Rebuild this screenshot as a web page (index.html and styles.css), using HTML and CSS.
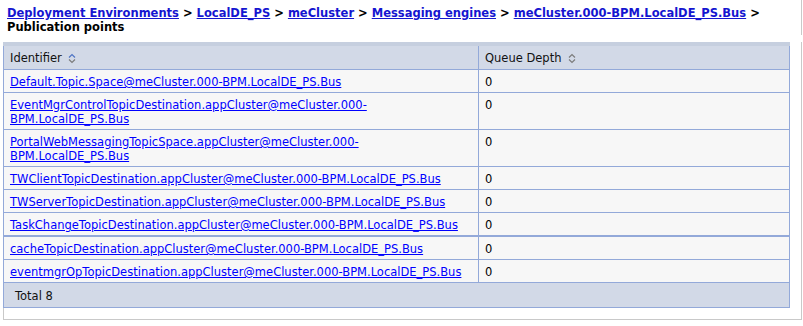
FILE: index.html
```html
<!DOCTYPE html>
<html lang="en">
<head>
    <meta charset="UTF-8">
    <title>Publication points</title>
    <link rel="stylesheet" href="styles.css">
</head>
<body>
    <div class="crumbs">
        <div class="crumb-line">
            <a href="#">Deployment Environments</a> &gt;
            <a href="#">LocalDE_PS</a> &gt;
            <a href="#">meCluster</a> &gt;
            <a href="#">Messaging engines</a> &gt;
            <a href="#">meCluster.000-BPM.LocalDE_PS.Bus</a> &gt;
        </div>
        <div class="crumb-title">Publication points</div>
    </div>

    <div class="frame">
        <table class="grid">
            <colgroup>
                <col class="col-id">
                <col>
            </colgroup>
            <thead>
                <tr>
                    <th>Identifier
                        <svg class="sort" width="8" height="13" viewBox="0 0 8 13">
                            <path d="M1 5.5 L4 2.5 L7 5.5" class="up active"/>
                            <path d="M1 7.5 L4 10.5 L7 7.5" class="down"/>
                        </svg>
                    </th>
                    <th>Queue Depth
                        <svg class="sort" width="8" height="13" viewBox="0 0 8 13">
                            <path d="M1 5.5 L4 2.5 L7 5.5" class="up"/>
                            <path d="M1 7.5 L4 10.5 L7 7.5" class="down"/>
                        </svg>
                    </th>
                </tr>
            </thead>
            <tbody>
                <tr><td><a href="#">Default.Topic.Space@meCluster.000-BPM.LocalDE_PS.Bus</a></td><td>0</td></tr>
                <tr><td><a href="#">EventMgrControlTopicDestination.appCluster@meCluster.000-<br>BPM.LocalDE_PS.Bus</a></td><td>0</td></tr>
                <tr><td><a href="#">PortalWebMessagingTopicSpace.appCluster@meCluster.000-<br>BPM.LocalDE_PS.Bus</a></td><td>0</td></tr>
                <tr><td><a href="#">TWClientTopicDestination.appCluster@meCluster.000-BPM.LocalDE_PS.Bus</a></td><td>0</td></tr>
                <tr><td><a href="#">TWServerTopicDestination.appCluster@meCluster.000-BPM.LocalDE_PS.Bus</a></td><td>0</td></tr>
                <tr class="page-end"><td><a href="#">TaskChangeTopicDestination.appCluster@meCluster.000-BPM.LocalDE_PS.Bus</a></td><td>0</td></tr>
                <tr><td><a href="#">cacheTopicDestination.appCluster@meCluster.000-BPM.LocalDE_PS.Bus</a></td><td>0</td></tr>
                <tr><td><a href="#">eventmgrOpTopicDestination.appCluster@meCluster.000-BPM.LocalDE_PS.Bus</a></td><td>0</td></tr>
            </tbody>
            <tfoot>
                <tr><td colspan="2" class="total">Total 8</td></tr>
            </tfoot>
        </table>
    </div>
</body>
</html>
```

FILE: styles.css
```css
:root {
    --link: #0000ff;
    --crumb-link: #1515d0;
    --row-bg: #f7f7f7;
    --head-bg: #d2d9e7;
    --grid-line: #93a9d9;
    --band: #c6cfdf;
    --frame-line: #c9c9c9;
}

body {
    margin: 0;
    font-family: "DejaVu Sans", Verdana, sans-serif;
    font-size: 11.5px;
    color: #000;
    background: #fff;
}

.crumbs {
    height: 35px;
    padding: 6px 0 0 7px;
    box-sizing: border-box;
    width: 802px;
    border-right: 1px solid var(--frame-line);
    font-size: 11.5px;
    font-weight: bold;
    line-height: 14px;
    color: #000;
}

.crumbs a {
    color: var(--crumb-link);
}

.frame {
    margin: 7px 0 0 3px;
    width: 797px;
    height: 277px;
    border-left: 1px solid var(--frame-line);
    border-right: 1px solid var(--frame-line);
    border-bottom: 1px solid var(--frame-line);
}

.grid {
    margin-left: -1px;
    width: 787px;
    table-layout: fixed;
    border-collapse: collapse;
    border-top: 4px solid var(--band);
    border-left: 1px solid var(--grid-line);
    border-right: 1px solid var(--grid-line);
}

.col-id {
    width: 475px;
}

.grid th {
    background: var(--head-bg);
    font-weight: normal;
    text-align: left;
    padding: 5px 6px 3px;
    line-height: 15px;
    border-top: 1px solid var(--grid-line);
    border-bottom: 1px solid var(--grid-line);
    border-left: 1px solid var(--grid-line);
    color: #111;
}

.sort {
    vertical-align: -3px;
    margin-left: 3px;
}

.sort path {
    fill: none;
    stroke: #7c7c7c;
    stroke-width: 1.2;
}

.sort path.active {
    stroke: #4f74c4;
}

.grid td {
    background: var(--row-bg);
    padding: 5px 6px 3px;
    line-height: 14px;
    vertical-align: top;
    border-bottom: 1px solid var(--grid-line);
    border-left: 1px solid var(--grid-line);
}

.grid td a {
    color: var(--link);
}

.page-end td {
    border-bottom-width: 2px;
}

.grid td.total {
    background: var(--head-bg);
    padding: 6px 11px 4px;
    color: #111;
}
```
